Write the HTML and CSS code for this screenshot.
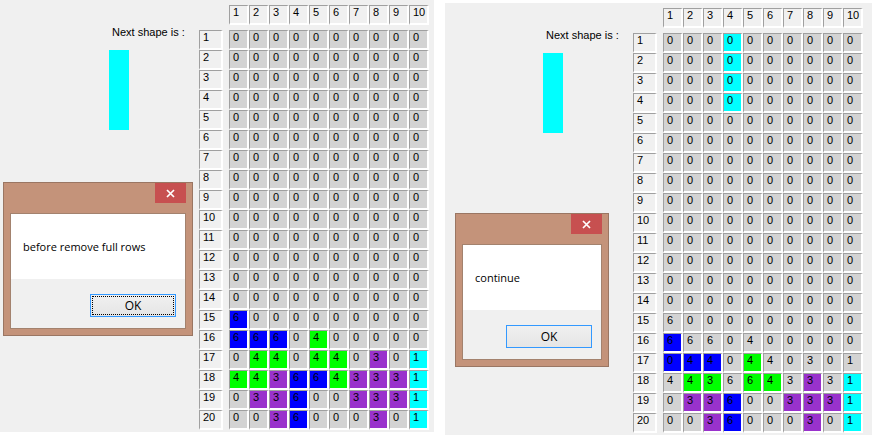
FILE: index.html
```html
<!DOCTYPE html>
<html lang="en">
<head>
<meta charset="utf-8">
<title>Shapes</title>
<link rel="stylesheet" href="styles.css">
</head>
<body>
<section class="win win-left">
  <div class="side">
    <div class="next-label">Next shape is :</div>
    <div class="preview"></div>
  </div>
  <div class="board">
    <span class="corner"></span>
    <span class="hd">1</span><span class="hd">2</span><span class="hd">3</span><span class="hd">4</span><span class="hd">5</span><span class="hd">6</span><span class="hd">7</span><span class="hd">8</span><span class="hd">9</span><span class="hd">10</span>
    <span class="rh">1</span><span>0</span><span>0</span><span>0</span><span>0</span><span>0</span><span>0</span><span>0</span><span>0</span><span>0</span><span>0</span>
    <span class="rh">2</span><span>0</span><span>0</span><span>0</span><span>0</span><span>0</span><span>0</span><span>0</span><span>0</span><span>0</span><span>0</span>
    <span class="rh">3</span><span>0</span><span>0</span><span>0</span><span>0</span><span>0</span><span>0</span><span>0</span><span>0</span><span>0</span><span>0</span>
    <span class="rh">4</span><span>0</span><span>0</span><span>0</span><span>0</span><span>0</span><span>0</span><span>0</span><span>0</span><span>0</span><span>0</span>
    <span class="rh">5</span><span>0</span><span>0</span><span>0</span><span>0</span><span>0</span><span>0</span><span>0</span><span>0</span><span>0</span><span>0</span>
    <span class="rh">6</span><span>0</span><span>0</span><span>0</span><span>0</span><span>0</span><span>0</span><span>0</span><span>0</span><span>0</span><span>0</span>
    <span class="rh">7</span><span>0</span><span>0</span><span>0</span><span>0</span><span>0</span><span>0</span><span>0</span><span>0</span><span>0</span><span>0</span>
    <span class="rh">8</span><span>0</span><span>0</span><span>0</span><span>0</span><span>0</span><span>0</span><span>0</span><span>0</span><span>0</span><span>0</span>
    <span class="rh">9</span><span>0</span><span>0</span><span>0</span><span>0</span><span>0</span><span>0</span><span>0</span><span>0</span><span>0</span><span>0</span>
    <span class="rh">10</span><span>0</span><span>0</span><span>0</span><span>0</span><span>0</span><span>0</span><span>0</span><span>0</span><span>0</span><span>0</span>
    <span class="rh">11</span><span>0</span><span>0</span><span>0</span><span>0</span><span>0</span><span>0</span><span>0</span><span>0</span><span>0</span><span>0</span>
    <span class="rh">12</span><span>0</span><span>0</span><span>0</span><span>0</span><span>0</span><span>0</span><span>0</span><span>0</span><span>0</span><span>0</span>
    <span class="rh">13</span><span>0</span><span>0</span><span>0</span><span>0</span><span>0</span><span>0</span><span>0</span><span>0</span><span>0</span><span>0</span>
    <span class="rh">14</span><span>0</span><span>0</span><span>0</span><span>0</span><span>0</span><span>0</span><span>0</span><span>0</span><span>0</span><span>0</span>
    <span class="rh">15</span><span class="b">6</span><span>0</span><span>0</span><span>0</span><span>0</span><span>0</span><span>0</span><span>0</span><span>0</span><span>0</span>
    <span class="rh">16</span><span class="b">6</span><span class="b">6</span><span class="b">6</span><span>0</span><span class="g">4</span><span>0</span><span>0</span><span>0</span><span>0</span><span>0</span>
    <span class="rh">17</span><span>0</span><span class="g">4</span><span class="g">4</span><span>0</span><span class="g">4</span><span class="g">4</span><span>0</span><span class="p">3</span><span>0</span><span class="y">1</span>
    <span class="rh">18</span><span class="g">4</span><span class="g">4</span><span class="p">3</span><span class="b">6</span><span class="b">6</span><span class="g">4</span><span class="p">3</span><span class="p">3</span><span class="p">3</span><span class="y">1</span>
    <span class="rh">19</span><span>0</span><span class="p">3</span><span class="p">3</span><span class="b">6</span><span>0</span><span>0</span><span class="p">3</span><span class="p">3</span><span class="p">3</span><span class="y">1</span>
    <span class="rh">20</span><span>0</span><span>0</span><span class="p">3</span><span class="b">6</span><span>0</span><span>0</span><span>0</span><span class="p">3</span><span>0</span><span class="y">1</span>
  </div>
</section>

<section class="win win-right">
  <div class="side">
    <div class="next-label">Next shape is :</div>
    <div class="preview"></div>
  </div>
  <div class="board">
    <span class="corner"></span>
    <span class="hd">1</span><span class="hd">2</span><span class="hd">3</span><span class="hd">4</span><span class="hd">5</span><span class="hd">6</span><span class="hd">7</span><span class="hd">8</span><span class="hd">9</span><span class="hd">10</span>
    <span class="rh">1</span><span>0</span><span>0</span><span>0</span><span class="y">0</span><span>0</span><span>0</span><span>0</span><span>0</span><span>0</span><span>0</span>
    <span class="rh">2</span><span>0</span><span>0</span><span>0</span><span class="y">0</span><span>0</span><span>0</span><span>0</span><span>0</span><span>0</span><span>0</span>
    <span class="rh">3</span><span>0</span><span>0</span><span>0</span><span class="y">0</span><span>0</span><span>0</span><span>0</span><span>0</span><span>0</span><span>0</span>
    <span class="rh">4</span><span>0</span><span>0</span><span>0</span><span class="y">0</span><span>0</span><span>0</span><span>0</span><span>0</span><span>0</span><span>0</span>
    <span class="rh">5</span><span>0</span><span>0</span><span>0</span><span>0</span><span>0</span><span>0</span><span>0</span><span>0</span><span>0</span><span>0</span>
    <span class="rh">6</span><span>0</span><span>0</span><span>0</span><span>0</span><span>0</span><span>0</span><span>0</span><span>0</span><span>0</span><span>0</span>
    <span class="rh">7</span><span>0</span><span>0</span><span>0</span><span>0</span><span>0</span><span>0</span><span>0</span><span>0</span><span>0</span><span>0</span>
    <span class="rh">8</span><span>0</span><span>0</span><span>0</span><span>0</span><span>0</span><span>0</span><span>0</span><span>0</span><span>0</span><span>0</span>
    <span class="rh">9</span><span>0</span><span>0</span><span>0</span><span>0</span><span>0</span><span>0</span><span>0</span><span>0</span><span>0</span><span>0</span>
    <span class="rh">10</span><span>0</span><span>0</span><span>0</span><span>0</span><span>0</span><span>0</span><span>0</span><span>0</span><span>0</span><span>0</span>
    <span class="rh">11</span><span>0</span><span>0</span><span>0</span><span>0</span><span>0</span><span>0</span><span>0</span><span>0</span><span>0</span><span>0</span>
    <span class="rh">12</span><span>0</span><span>0</span><span>0</span><span>0</span><span>0</span><span>0</span><span>0</span><span>0</span><span>0</span><span>0</span>
    <span class="rh">13</span><span>0</span><span>0</span><span>0</span><span>0</span><span>0</span><span>0</span><span>0</span><span>0</span><span>0</span><span>0</span>
    <span class="rh">14</span><span>0</span><span>0</span><span>0</span><span>0</span><span>0</span><span>0</span><span>0</span><span>0</span><span>0</span><span>0</span>
    <span class="rh">15</span><span>6</span><span>0</span><span>0</span><span>0</span><span>0</span><span>0</span><span>0</span><span>0</span><span>0</span><span>0</span>
    <span class="rh">16</span><span class="b">6</span><span>6</span><span>6</span><span>0</span><span>4</span><span>0</span><span>0</span><span>0</span><span>0</span><span>0</span>
    <span class="rh">17</span><span class="b">0</span><span class="b">4</span><span class="b">4</span><span>0</span><span class="g">4</span><span>4</span><span>0</span><span>3</span><span>0</span><span>1</span>
    <span class="rh">18</span><span>4</span><span class="g">4</span><span class="g">3</span><span>6</span><span class="g">6</span><span class="g">4</span><span>3</span><span class="p">3</span><span>3</span><span class="y">1</span>
    <span class="rh">19</span><span>0</span><span class="p">3</span><span class="p">3</span><span class="b">6</span><span>0</span><span>0</span><span class="p">3</span><span class="p">3</span><span class="p">3</span><span class="y">1</span>
    <span class="rh">20</span><span>0</span><span>0</span><span class="p">3</span><span class="b">6</span><span>0</span><span>0</span><span>0</span><span class="p">3</span><span>0</span><span class="y">1</span>
  </div>
</section>

<div class="dialog dialog-left">
  <div class="titlebar">
    <span class="close"><svg width="9" height="9" viewBox="0 0 9 9"><path d="M1 1 L8 8 M8 1 L1 8" stroke="#fff" stroke-width="1.7" fill="none"/></svg></span>
  </div>
  <div class="client">
    <div class="msg">before remove full rows</div>
    <div class="actions"><span class="ok focused">OK</span></div>
  </div>
</div>

<div class="dialog dialog-right">
  <div class="titlebar">
    <span class="close"><svg width="9" height="9" viewBox="0 0 9 9"><path d="M1 1 L8 8 M8 1 L1 8" stroke="#fff" stroke-width="1.7" fill="none"/></svg></span>
  </div>
  <div class="client">
    <div class="msg">continue</div>
    <div class="actions"><span class="ok">OK</span></div>
  </div>
</div>
</body>
</html>
```

FILE: styles.css
```css
* { box-sizing: border-box; }
html, body { margin: 0; padding: 0; }
body {
  width: 872px;
  height: 435px;
  overflow: hidden;
  position: relative;
  background: #ffffff;
  font-family: "Liberation Sans", Arial, sans-serif;
  font-size: 11px;
  color: #000;
}

/* application windows */
.win {
  position: absolute;
  display: flex;
  align-items: flex-start;
  height: 432px;
  padding-top: 5px;
  background: #f0f0f0;
}
.win-left { left: 0; top: 0; width: 434px; }
.win-right { left: 445px; top: 3px; width: 427px; }

.side {
  flex: none;
  display: flex;
  flex-direction: column;
  align-items: flex-start;
}
.win-left .side { width: 199px; padding-left: 109px; }
.win-right .side { width: 188px; padding-left: 98px; }

.next-label {
  margin: 21px 0 0 3px;
  line-height: 13px;
  white-space: nowrap;
}
.preview {
  width: 20px;
  height: 80px;
  margin-top: 11px;
  background: #00ffff;
}

/* board */
.board {
  flex: none;
  display: grid;
  grid-template-columns: 30px repeat(10, 20px);
  grid-template-rows: 25px repeat(20, 20px);
}
.board span {
  display: block;
  width: 20px;
  height: 20px;
  padding-left: 3px;
  line-height: 13px;
  border-style: solid;
  border-width: 1px 2px 2px 1px;
  border-color: #a0a0a0 #ffffff #ffffff #a0a0a0;
  background: #d3d3d3;
  white-space: nowrap;
}
.board .corner { border: 0; background: none; }
.board .hd { background: #f0f0f0; }
.board .rh { width: 24px; background: #f0f0f0; }
.board .b { background: #0000ff; }
.board .g { background: #00ff00; }
.board .p { background: #9932cc; }
.board .y { background: #00ffff; }

/* message boxes */
.dialog {
  position: absolute;
  background: #c4937a;
  border: 1px solid #9a7663;
  padding: 0 6px 6px;
  font-family: "Segoe UI", "Open Sans", "Noto Sans", sans-serif;
  font-size: 11px;
}
.dialog-left { left: 3px; top: 182px; width: 190px; }
.dialog-right { left: 455px; top: 213px; width: 154px; }

.titlebar {
  height: 30px;
  display: flex;
  justify-content: flex-end;
  align-items: flex-start;
}
.close {
  width: 31px;
  height: 20px;
  background: #c75050;
  display: flex;
  align-items: center;
  justify-content: center;
}
.close svg { display: block; }

.client {
  border: 1px solid #a3826e;
  background: #f0f0f0;
}
.msg {
  height: 65px;
  background: #ffffff;
  padding: 25px 0 0 12px;
  line-height: 16px;
  white-space: nowrap;
}
.actions {
  height: 49px;
  display: flex;
  justify-content: flex-end;
  align-items: flex-start;
  padding: 15px 9px 0 0;
}
.ok {
  width: 86px;
  height: 23px;
  display: flex;
  align-items: center;
  justify-content: center;
  border: 1px solid #3399ff;
  background: linear-gradient(#f0f0f0, #e5e5e5);
  line-height: 16px;
  font-size: 12px;
}
.ok.focused {
  outline: 1px dotted #000;
  outline-offset: -3px;
}
```
